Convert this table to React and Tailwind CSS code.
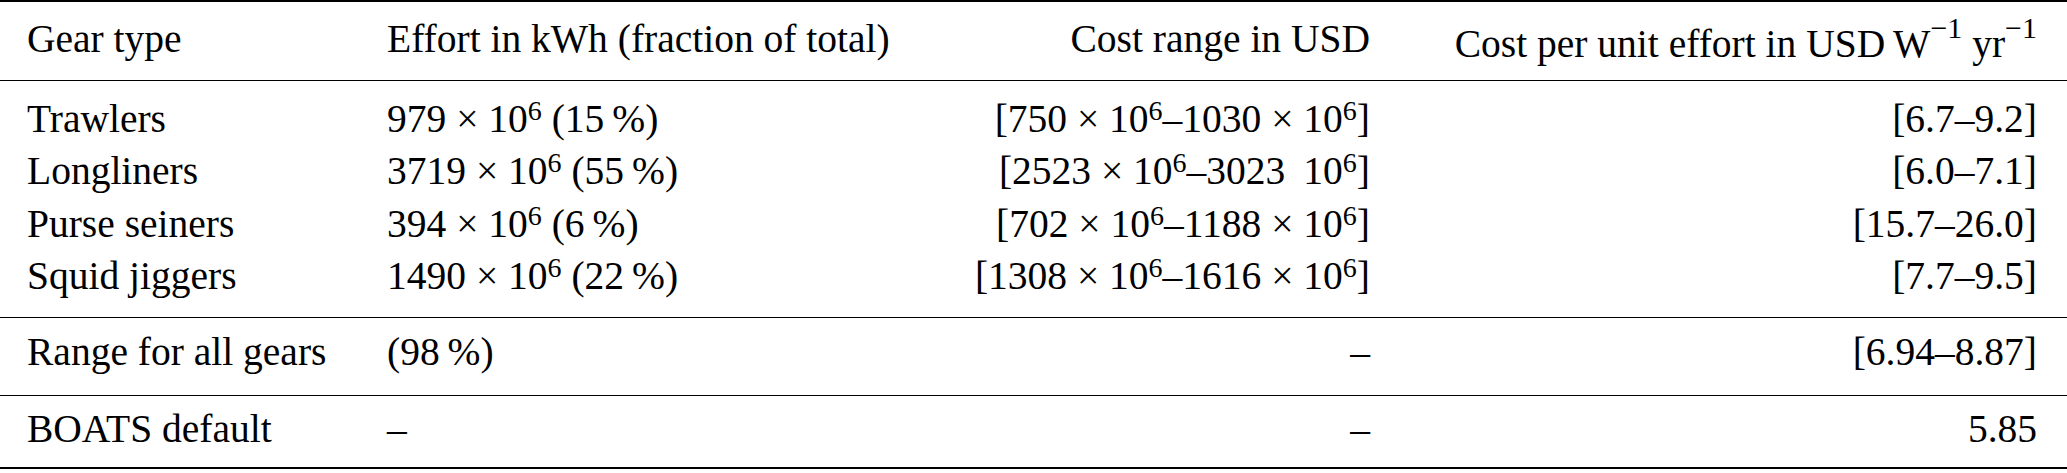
import React from "react";

const FONT = "'Liberation Serif', 'Times New Roman', serif";

const Sup = ({ children }) => (
  <span className="text-[28px] leading-none align-[12px]">{children}</span>
);
const HSup = ({ children }) => (
  <span className="text-[30px] leading-none align-[19px]">{children}</span>
);

const E6 = ({ n }) => (
  <>
    {n}
    {" × 10"}
    <Sup>6</Sup>
  </>
);

const TS = "\u2009";

const rows = [
  {
    g: "Trawlers",
    e: <><E6 n="979" /> (15{TS}%)</>,
    c: <>{"["}<E6 n="750" />–<E6 n="1030" />{"]"}</>,
    u: "[6.7–9.2]",
  },
  {
    g: "Longliners",
    e: <><E6 n="3719" /> (55{TS}%)</>,
    c: (
      <>
        {"["}<E6 n="2523" />–3023<span className="ml-[18px]">10</span>
        <Sup>6</Sup>{"]"}
      </>
    ),
    u: "[6.0–7.1]",
  },
  {
    g: "Purse seiners",
    e: <><E6 n="394" /> (6{TS}%)</>,
    c: <>{"["}<E6 n="702" />–<E6 n="1188" />{"]"}</>,
    u: "[15.7–26.0]",
  },
  {
    g: "Squid jiggers",
    e: <><E6 n="1490" /> (22{TS}%)</>,
    c: <>{"["}<E6 n="1308" />–<E6 n="1616" />{"]"}</>,
    u: "[7.7–9.5]",
  },
];

const Row = ({ g, e, c, u }) => (
  <div className="grid grid-cols-[360px_1fr_auto_667px] h-[52.33px] leading-[52px] whitespace-nowrap">
    <div>{g}</div>
    <div>{e}</div>
    <div className="text-right">{c}</div>
    <div className="text-right">{u}</div>
  </div>
);

export default function App() {
  return (
    <div
      className="w-[2067px] h-[473px] bg-white text-black text-[39.5px] [font-family:'Liberation_Serif']"
      style={{ fontFamily: FONT }}
    >
      <div className="border-t-[2px] border-b-[2px] border-black">
        <div className="pl-[27px] pr-[30px] pt-[11px] pb-[15px] border-b border-black">
          <div className="grid grid-cols-[360px_1fr_auto_667px] h-[52px] leading-[52px] whitespace-nowrap">
            <div>Gear type</div>
            <div>Effort in kWh (fraction of total)</div>
            <div className="text-right">Cost range in USD</div>
            <div className="text-right">
              Cost per unit effort in USD{TS}W<HSup>−1</HSup> yr<HSup>−1</HSup>
            </div>
          </div>
        </div>
        <div className="pl-[27px] pr-[30px] pt-[12px] pb-[15px] border-b border-black">
          {rows.map((r) => (
            <Row key={r.g} {...r} />
          ))}
        </div>
        <div className="pl-[27px] pr-[30px] pt-[8px] pb-[16px] border-b border-black">
          <Row g="Range for all gears" e={<>(98{TS}%)</>} c="–" u="[6.94–8.87]" />
        </div>
        <div className="pl-[27px] pr-[30px] pt-[7px] pb-[12px]">
          <Row g="BOATS default" e="–" c="–" u="5.85" />
        </div>
      </div>
    </div>
  );
}
